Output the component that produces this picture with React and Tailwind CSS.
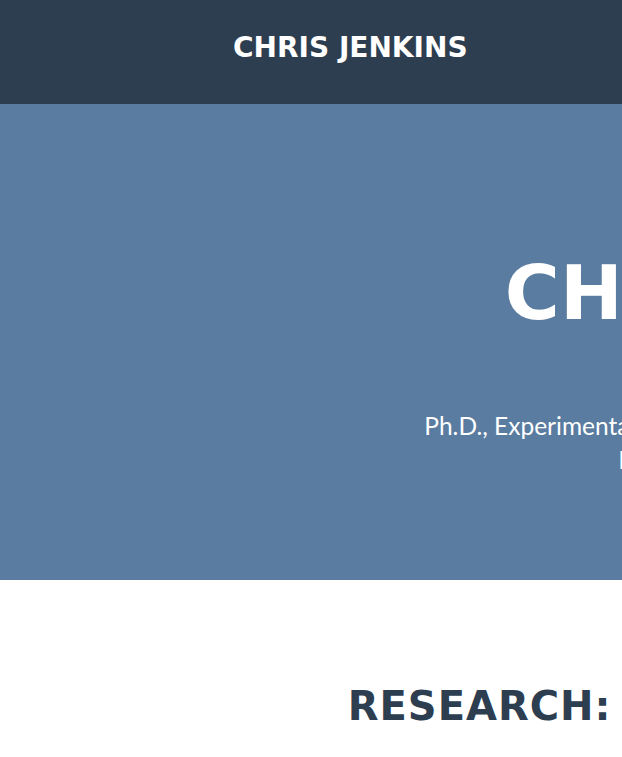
export default function App() {
  const head = { fontFamily: '"DejaVu Sans", "Liberation Sans", sans-serif' };
  const body = { fontFamily: 'Lato, "Open Sans", sans-serif' };
  return (
    <div className="w-full min-h-screen overflow-hidden bg-white">
      <div className="w-[1638px]">
        <nav className="h-[104px] bg-[#2c3e50] pl-[233px] pt-[34px]">
          <a href="#" className="font-bold text-[28px] leading-[28px] text-white uppercase" style={head}>Chris Jenkins</a>
        </nav>

        <header className="bg-[#597ca0] text-white text-center pt-[152px] pb-[103px]">
          <h1 className="font-bold text-[75px] leading-[75px] uppercase" style={head}>Chris Jenkins</h1>
          <div className="mt-[78px] text-[24.5px] leading-[34px]" style={body}>
            <p>Ph.D., Experimental Psychology - Cognitive Science - Learning &amp; Memory.</p>
            <p>Indiana University, Bloomington, USA</p>
          </div>
        </header>

        <section className="pt-[106px] pb-20 text-center">
          <h2 className="font-bold text-[40px] leading-[40px] tracking-[1px] text-[#2c3e50] uppercase" style={head}>Research: Child Learning &amp; Memory</h2>
        </section>
      </div>
    </div>
  );
}
